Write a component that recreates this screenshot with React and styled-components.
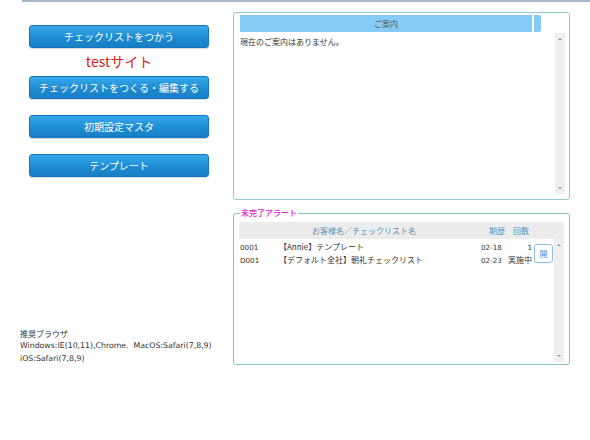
import React from "react";
import styled, { createGlobalStyle } from "styled-components";

const Global = createGlobalStyle`
  html, body { margin: 0; padding: 0; background: #fff; }
  body { font-family: "DejaVu Sans", "Noto Sans CJK JP", sans-serif; color: #333; }
  * { box-sizing: border-box; }
`;

const Page = styled.div`
  width: 590px;
  height: 440px;
  overflow: hidden;
`;

const TopRule = styled.div`
  margin-left: 22px;
  height: 2px;
  background: #a9b7cd;
`;

const Main = styled.div`
  display: flex;
  padding-top: 10px;
`;

const LeftCol = styled.div`
  width: 233px;
  display: flex;
  flex-direction: column;
  align-items: flex-start;
`;

const NavButton = styled.button`
  margin-left: 29px;
  margin-top: ${(p) => p.$mt}px;
  width: 180px;
  height: 23px;
  border: 1px solid #1675ba;
  border-radius: 3px;
  background: linear-gradient(#36a9ec, #1d8ad0 60%, #177fc5);
  color: #fff;
  font-family: "Noto Sans CJK JP", sans-serif;
  font-size: 10px;
  line-height: 21px;
  padding: 0;
  text-align: center;
  box-shadow: 0 1px 1px rgba(0, 0, 0, 0.15);
`;

const SiteName = styled.div`
  margin-left: 29px;
  width: 180px;
  height: 28px;
  text-align: center;
  color: #d92326;
  font-family: "Noto Sans CJK JP", sans-serif;
  font-size: 14px;
  line-height: 26px;
`;

const BrowserNote = styled.div`
  margin-top: auto;
  margin-left: 20px;
  margin-bottom: 0;
  font-size: 7.8px;
  line-height: 12.5px;
  color: #333;
  white-space: nowrap;
`;

const NoteTitle = styled.div`
  font-family: "Noto Sans CJK JP", sans-serif;
  font-size: 8px;
`;

const RightCol = styled.div`
  width: 337px;
  display: flex;
  flex-direction: column;
`;

const Panel = styled.div`
  height: 188px;
  border: 1px solid #93cbd5;
  border-radius: 3px;
  padding: 2px 4px 5px 6px;
  display: flex;
  flex-direction: column;
`;

const PanelHead = styled.div`
  display: flex;
  gap: 2px;
  height: 17px;
`;

const HeadBar = styled.div`
  width: ${(p) => p.$w}px;
  background: #84cbf6;
  border-radius: ${(p) => (p.$tail ? "0 2px 2px 0" : "0")};
  font-family: "Noto Sans CJK JP", sans-serif;
  font-size: 8px;
  line-height: 17px;
  text-align: center;
  color: #555;
`;

const PanelBody = styled.div`
  flex: 1;
  display: flex;
  margin-top: 1px;
`;

const BodyText = styled.div`
  flex: 1;
  font-family: "Noto Sans CJK JP", sans-serif;
  font-size: 8px;
  line-height: 12px;
  padding-top: 3px;
  color: #333;
`;

const Scrollbar = styled.div`
  width: 10px;
  background: #efefef;
  display: flex;
  flex-direction: column;
  justify-content: space-between;
  align-items: center;
  padding: 5px 0;
`;

const Arrow = styled.div`
  width: 0;
  height: 0;
  border-left: 2px solid transparent;
  border-right: 2px solid transparent;
  ${(p) =>
    p.$down
      ? "border-top: 2px solid #9a9a9a;"
      : "border-bottom: 2px solid #9a9a9a;"}
`;

const Fieldset = styled.fieldset`
  margin: 7px 0 0 0;
  border: 1px solid #86c6c8;
  border-radius: 3px;
  padding: 3px 5px 2px 5px;
  min-width: 0;
`;

const Legend = styled.legend`
  padding: 0 1px;
  margin-left: 1px;
  font-family: "Noto Sans CJK JP", sans-serif;
  font-size: 8px;
  line-height: 12px;
  font-weight: 500;
  color: #de22cf;
`;

const FieldBody = styled.div`
  height: 140px;
  display: flex;
  flex-direction: column;
`;

const TableHead = styled.div`
  height: 17px;
  background: #ececec;
  display: grid;
  grid-template-columns: 250px 24px 24px 1fr;
  font-family: "Noto Sans CJK JP", sans-serif;
  font-size: 8px;
  line-height: 17px;
  color: #5b8fb8;
  white-space: nowrap;
`;

const HeadCell = styled.div`
  text-align: ${(p) => p.$align || "left"};
  padding-left: ${(p) => p.$pl || 0}px;
`;

const TableBody = styled.div`
  flex: 1;
  display: flex;
`;

const Rows = styled.div`
  flex: 1;
  padding-top: 2px;
  position: relative;
`;

const Row = styled.div`
  display: grid;
  grid-template-columns: 40px 202px 25px 26px;
  font-family: "Noto Sans CJK JP", sans-serif;
  font-size: 8px;
  line-height: 11.5px;
  color: #333;
  white-space: nowrap;
`;

const Cell = styled.div`
  text-align: ${(p) => p.$align || "left"};
  padding-left: ${(p) => p.$pl || 0}px;
`;

const Mono = styled.span`
  font-family: "DejaVu Sans", sans-serif;
  font-size: 7.2px;
`;

const OpenBtn = styled.div`
  position: absolute;
  left: 295px;
  top: 5px;
  width: 19px;
  height: 19px;
  border: 1px solid #8ec1e2;
  border-radius: 3px;
  background: #fff;
  color: #3b8fd6;
  font-family: "Noto Sans CJK JP", sans-serif;
  font-size: 8px;
  line-height: 17px;
  text-align: center;
`;

export default function App() {
  return (
    <Page>
      <Global />
      <TopRule />
      <Main>
        <LeftCol>
          <NavButton $mt={13}>チェックリストをつかう</NavButton>
          <SiteName>testサイト</SiteName>
          <NavButton $mt={0}>チェックリストをつくる・編集する</NavButton>
          <NavButton $mt={16}>初期設定マスタ</NavButton>
          <NavButton $mt={16}>テンプレート</NavButton>
          <BrowserNote>
            <NoteTitle>推奨ブラウザ</NoteTitle>
            <div>Windows:IE(10,11),Chrome.&nbsp; MacOS:Safari(7,8,9)</div>
            <div>iOS:Safari(7,8,9)</div>
          </BrowserNote>
        </LeftCol>
        <RightCol>
          <Panel>
            <PanelHead>
              <HeadBar $w={292}>ご案内</HeadBar>
              <HeadBar $w={7} $tail />
            </PanelHead>
            <PanelBody>
              <BodyText>現在のご案内はありません。</BodyText>
              <Scrollbar>
                <Arrow />
                <Arrow $down />
              </Scrollbar>
            </PanelBody>
          </Panel>
          <Fieldset>
            <Legend>未完了アラート</Legend>
            <FieldBody>
              <TableHead>
                <HeadCell $align="center">お客様名／チェックリスト名</HeadCell>
                <HeadCell>期歴</HeadCell>
                <HeadCell>回数</HeadCell>
                <HeadCell />
              </TableHead>
              <TableBody>
                <Rows>
                  <Row>
                    <Cell $pl={1}><Mono>0001</Mono></Cell>
                    <Cell>【Annie】テンプレート</Cell>
                    <Cell><Mono>02-18</Mono></Cell>
                    <Cell $align="right"><Mono>1</Mono></Cell>
                  </Row>
                  <Row>
                    <Cell $pl={1}><Mono>D001</Mono></Cell>
                    <Cell>【デフォルト全社】朝礼チェックリスト</Cell>
                    <Cell><Mono>02-23</Mono></Cell>
                    <Cell $align="right">実施中</Cell>
                  </Row>
                  <OpenBtn>開</OpenBtn>
                </Rows>
                <Scrollbar>
                  <Arrow />
                  <Arrow $down />
                </Scrollbar>
              </TableBody>
            </FieldBody>
          </Fieldset>
        </RightCol>
      </Main>
    </Page>
  );
}
